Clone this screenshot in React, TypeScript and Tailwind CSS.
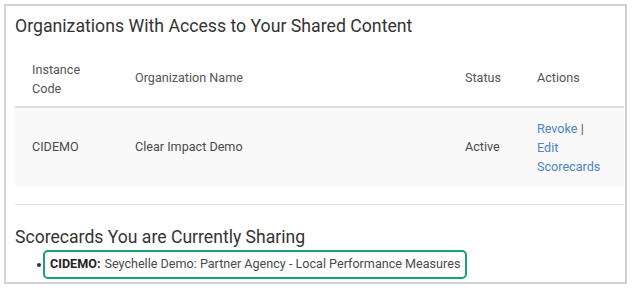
import React from "react";

export default function App() {
  const font = { fontFamily: "Roboto, 'Liberation Sans', sans-serif" };
  return (
    <div className="w-[635px] h-[288px] bg-white overflow-hidden" style={font}>
      <div className="ml-[4px] mt-[4px] w-[623px] h-[280px] border-2 border-[#d2d2d2] pl-[9px] pr-[1px] overflow-hidden">
        <h1 className="mt-[8px] text-[17.7px] leading-[24px] text-[#333] font-normal">
          Organizations With Access to Your Shared Content
        </h1>
        <div className="mt-[13px] text-[12.6px] text-[#555]">
          <div className="grid grid-cols-[103px_330px_72px_1fr] h-[57px] items-center border-b-2 border-[#dcdcdc]">
            <div className="pl-[17px] leading-[19px]">
              Instance
              <br />
              Code
            </div>
            <div className="pl-[17px]">Organization Name</div>
            <div className="pl-[17px]">Status</div>
            <div className="pl-[17px]">Actions</div>
          </div>
          <div className="grid grid-cols-[103px_330px_72px_1fr] h-[78px] items-center bg-[#f9f9f9] text-[#4a4a4a]">
            <div className="pl-[17px]">CIDEMO</div>
            <div className="pl-[17px]">Clear Impact Demo</div>
            <div className="pl-[17px]">Active</div>
            <div className="pl-[17px] leading-[19px] text-[#4a86c8]">
              Revoke <span className="text-[#555]">|</span>
              <br />
              Edit
              <br />
              Scorecards
            </div>
          </div>
        </div>
        <div className="mt-[18px] border-t border-[#e2e2e2]" />
        <h2 className="mt-[20px] text-[17.6px] leading-[24px] text-[#333] font-normal">
          Scorecards You are Currently Sharing
        </h2>
        <div className="mt-[1px] flex items-center text-[12.6px] text-[#4a4a4a]">
          <span className="ml-[22px] w-[4px] h-[4px] rounded-full bg-[#333]" />
          <div className="ml-[2px] h-[29px] px-[5px] flex items-center border-2 border-[#1aa07b] rounded-[5px]">
            <b className="font-bold text-[#222]">CIDEMO:</b>
            <span className="ml-[4px]">Seychelle Demo: Partner Agency - Local Performance Measures</span>
          </div>
        </div>
      </div>
    </div>
  );
}
